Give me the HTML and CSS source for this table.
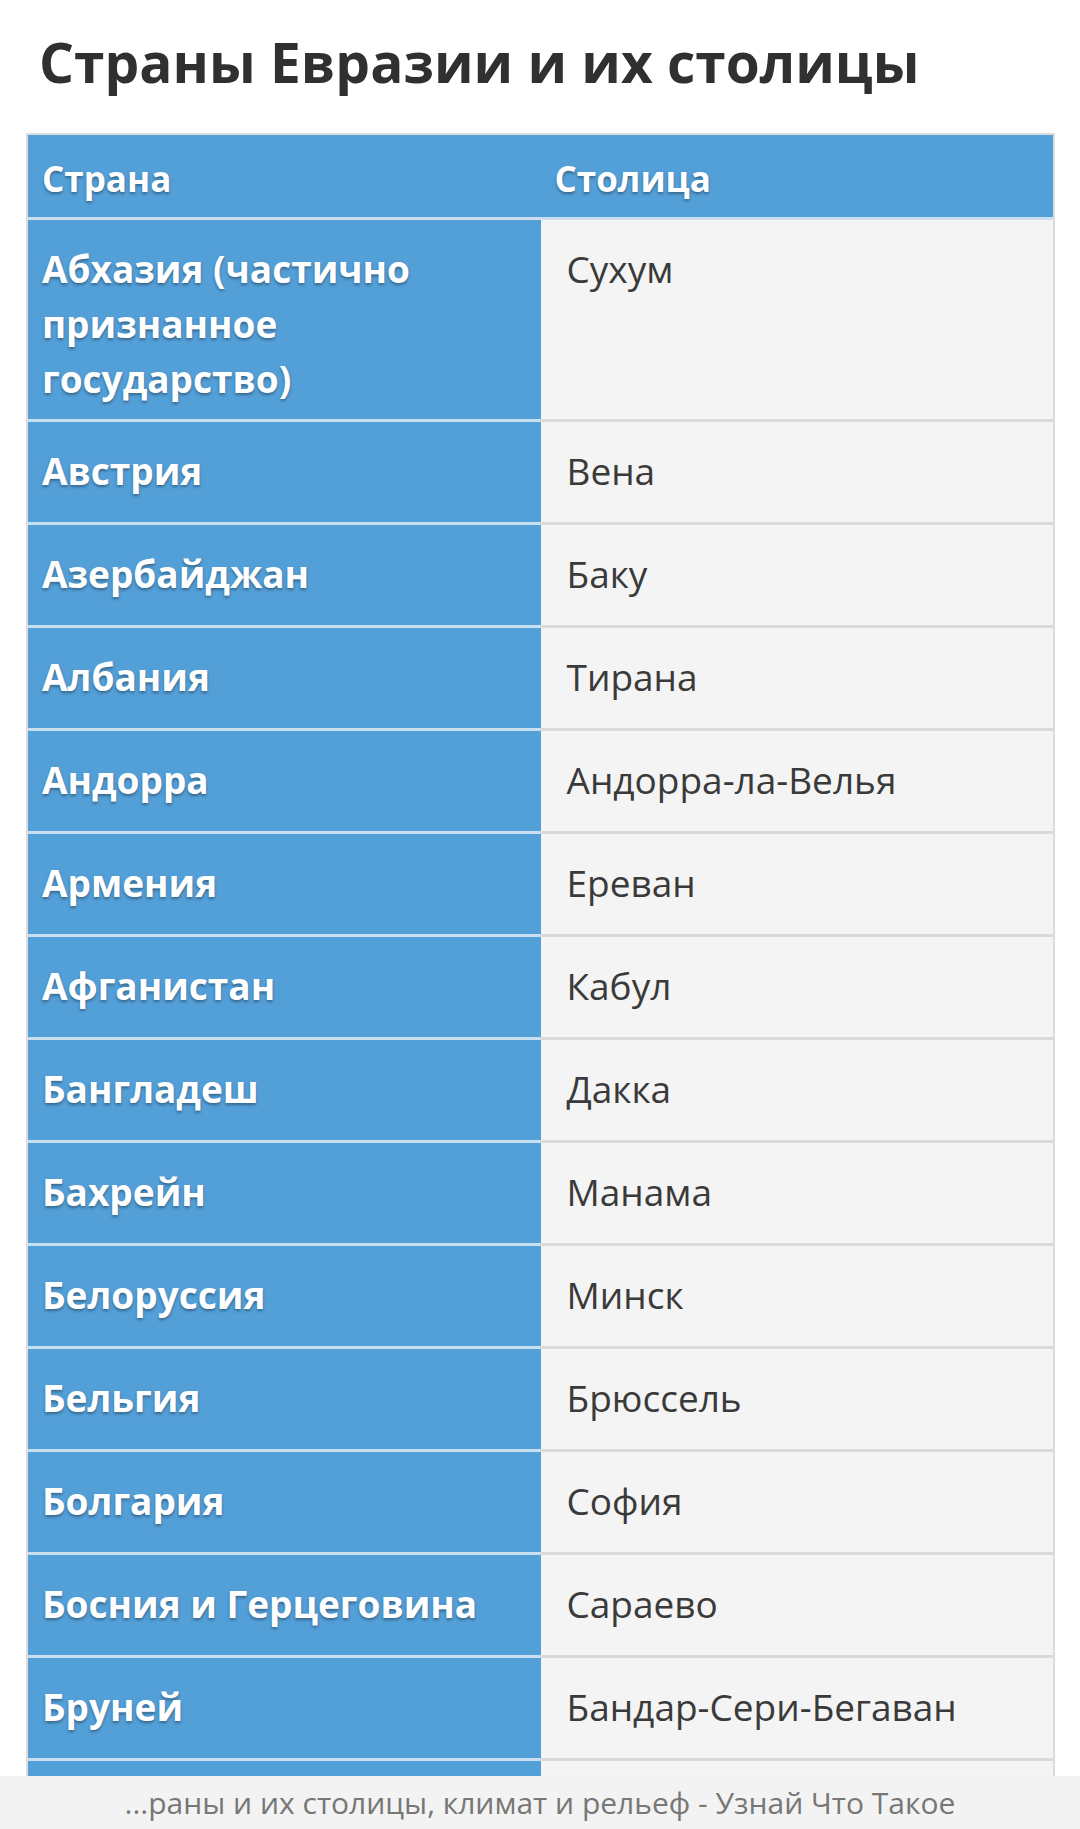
FILE: index.html
```html
<!DOCTYPE html>
<html lang="ru">
<head>
<meta charset="utf-8">
<title>Страны Евразии и их столицы</title>
<link rel="stylesheet" href="styles.css">
</head>
<body>
<h1 class="title">Страны Евразии и их столицы</h1>
<table class="capitals">
  <thead>
    <tr><th class="hcell">Страна</th><th class="hcell">Столица</th></tr>
  </thead>
  <tbody>
    <tr class="tall"><td class="country">Абхазия (частично признанное государство)</td><td class="capital">Сухум</td></tr>
    <tr><td class="country">Австрия</td><td class="capital">Вена</td></tr>
    <tr><td class="country">Азербайджан</td><td class="capital">Баку</td></tr>
    <tr><td class="country">Албания</td><td class="capital">Тирана</td></tr>
    <tr><td class="country">Андорра</td><td class="capital">Андорра-ла-Велья</td></tr>
    <tr><td class="country">Армения</td><td class="capital">Ереван</td></tr>
    <tr><td class="country">Афганистан</td><td class="capital">Кабул</td></tr>
    <tr><td class="country">Бангладеш</td><td class="capital">Дакка</td></tr>
    <tr><td class="country">Бахрейн</td><td class="capital">Манама</td></tr>
    <tr><td class="country">Белоруссия</td><td class="capital">Минск</td></tr>
    <tr><td class="country">Бельгия</td><td class="capital">Брюссель</td></tr>
    <tr><td class="country">Болгария</td><td class="capital">София</td></tr>
    <tr><td class="country">Босния и Герцеговина</td><td class="capital">Сараево</td></tr>
    <tr><td class="country">Бруней</td><td class="capital">Бандар-Сери-Бегаван</td></tr>
    <tr class="hidden-row"><td class="country"></td><td class="capital"></td></tr>
  </tbody>
</table>
<div class="source-bar">...раны и их столицы, климат и рельеф - Узнай Что Такое</div>
</body>
</html>
```
FILE: styles.css
```css
html, body {
  margin: 0;
  padding: 0;
  background: #ffffff;
}
body {
  font-family: "Open Sans", "Noto Sans", "DejaVu Sans", sans-serif;
  color: #333333;
}
.title {
  margin: 28px 0 38px 0;
  padding-left: 39px;
  font-size: 55px;
  line-height: 67px;
  font-weight: 700;
  color: #303030;
}
.capitals {
  margin-left: 26px;
  width: 1029px;
  border-collapse: separate;
  border-spacing: 0;
  border: 2px solid #dcdcdc;
  table-layout: fixed;
}
.hcell {
  width: 50%;
  text-align: left;
  background: #539fd8;
  color: #ffffff;
  font-size: 35px;
  line-height: 55px;
  font-weight: 700;
  padding: 16px 12px 11px 14px;
  border-bottom: 3px solid #cddfee;
  text-shadow: 0 2px 3px rgba(0, 0, 0, 0.35);
}
.country, .capital {
  vertical-align: top;
  font-size: 37px;
  line-height: 55px;
  padding-top: 21px;
  padding-bottom: 24px;
}
.country {
  background: #539fd8;
  color: #ffffff;
  font-weight: 700;
  padding-left: 14px;
  padding-right: 14px;
  border-bottom: 3px solid #c9def0;
  text-shadow: 0 2px 3px rgba(0, 0, 0, 0.35);
}
.capital {
  background: #f4f4f4;
  color: #3a3a3a;
  font-weight: 400;
  padding-left: 26px;
  padding-right: 14px;
  border-bottom: 3px solid #dadada;
}
.tall .country, .tall .capital {
  padding-bottom: 13px;
}
.hidden-row .country, .hidden-row .capital {
  height: 55px;
}
.source-bar {
  position: fixed;
  left: 0;
  right: 0;
  bottom: 0;
  height: 53px;
  background: #f3f3f3;
  color: #777777;
  font-size: 30px;
  line-height: 53px;
  text-align: center;
  white-space: nowrap;
  overflow: hidden;
}
```
